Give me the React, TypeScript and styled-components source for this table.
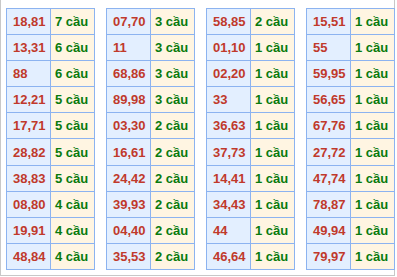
import React from "react";
import styled, { createGlobalStyle } from "styled-components";

const Global = createGlobalStyle`
  html, body { margin: 0; padding: 0; background: #fff; }
  body { font-family: "Liberation Sans", Arial, sans-serif; }
`;

const Frame = styled.div`
  box-sizing: border-box;
  width: 395px;
  height: 276px;
  border: 1px solid #c8c8c8;
  border-top: none;
  padding: 8px 0 0 5px;
  display: flex;
  gap: 11px;
  align-items: flex-start;
`;

const Table = styled.table`
  border-collapse: collapse;
  width: 88px;
  table-layout: fixed;
`;

const Line = styled.tr`
  height: 26.1px;
`;

const NumCell = styled.td`
  box-sizing: border-box;
  width: 44px;
  padding: 0 0 0 6px;
  border: 1px solid #8cb3f0;
  background: #e3efff;
  color: #c0392b;
  font-weight: bold;
  font-size: 13px;
  line-height: 15px;
  white-space: nowrap;
  vertical-align: middle;
`;

const CountCell = styled.td`
  box-sizing: border-box;
  width: 44px;
  padding: 0 0 0 4px;
  border: 1px solid #8cb3f0;
  background: #fff5e2;
  color: #097a0e;
  font-weight: bold;
  font-size: 13px;
  line-height: 15px;
  white-space: nowrap;
  vertical-align: middle;
`;

type Row = [string, number];

const data: Row[][] = [
  [["18,81", 7], ["13,31", 6], ["88", 6], ["12,21", 5], ["17,71", 5], ["28,82", 5], ["38,83", 5], ["08,80", 4], ["19,91", 4], ["48,84", 4]],
  [["07,70", 3], ["11", 3], ["68,86", 3], ["89,98", 3], ["03,30", 2], ["16,61", 2], ["24,42", 2], ["39,93", 2], ["04,40", 2], ["35,53", 2]],
  [["58,85", 2], ["01,10", 1], ["02,20", 1], ["33", 1], ["36,63", 1], ["37,73", 1], ["14,41", 1], ["34,43", 1], ["44", 1], ["46,64", 1]],
  [["15,51", 1], ["55", 1], ["59,95", 1], ["56,65", 1], ["67,76", 1], ["27,72", 1], ["47,74", 1], ["78,87", 1], ["49,94", 1], ["79,97", 1]],
];

export default function App() {
  return (
    <>
      <Global />
      <Frame>
        {data.map((rows, i) => (
          <Table key={i}>
            <tbody>
              {rows.map(([n, c], j) => (
                <Line key={j}>
                  <NumCell>{n}</NumCell>
                  <CountCell>{c} cầu</CountCell>
                </Line>
              ))}
            </tbody>
          </Table>
        ))}
      </Frame>
    </>
  );
}
